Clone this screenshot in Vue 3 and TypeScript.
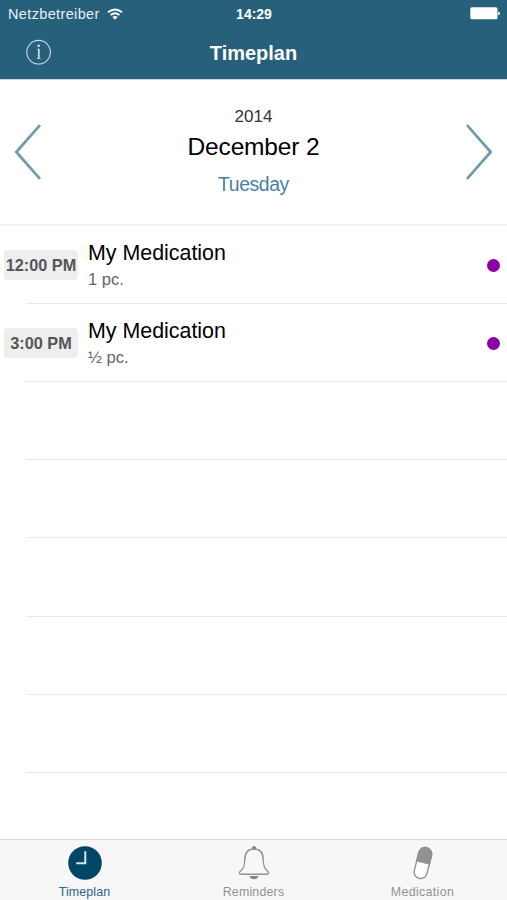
<script setup lang="ts">
interface Dose {
  time: string
  name: string
  amount: string
}

const doses: Dose[] = [
  { time: '12:00 PM', name: 'My Medication', amount: '1 pc.' },
  { time: '3:00 PM', name: 'My Medication', amount: '½ pc.' },
]
const emptyRows = 5
</script>

<template>
  <div class="screen">
    <header class="top">
      <div class="status">
        <div class="carrier">
          <span>Netzbetreiber</span>
          <svg class="wifi" width="16" height="12" viewBox="0 0 16 12" fill="none" stroke="#fff" stroke-width="2">
            <path d="M1 4.3Q8-1.3 15 4.3M3.6 7.1Q8 3.5 12.4 7.1" />
            <path d="M5.4 9Q8 7 10.6 9L8 11.7Z" fill="#fff" stroke="none" />
          </svg>
        </div>
        <span class="clock">14:29</span>
        <svg class="battery" width="30" height="13" viewBox="0 0 30 13" fill="#fff">
          <rect x="0.3" y="0.3" width="27.2" height="12" rx="1.6" />
          <path d="M28.2 4.4Q30 4.8 30 6.3T28.2 8.2Z" />
        </svg>
      </div>
      <nav class="navbar">
        <svg class="info" width="26" height="26" viewBox="0 0 26 26" fill="none" stroke="#c4dae5">
          <circle cx="12.6" cy="13.2" r="11.8" stroke-width="1.1" />
          <path d="M12.8 9.8V19.6" stroke-width="1.8" />
          <path d="M11.2 10.2H13M10.9 19.5H14.7" stroke-width="0.8" />
          <circle cx="12.7" cy="6.8" r="1.25" fill="#d3e5ee" stroke="none" />
        </svg>
        <h1>Timeplan</h1>
      </nav>
    </header>

    <section class="date">
      <svg width="28" height="56" viewBox="0 0 28 56" fill="none" stroke="#709bad" stroke-width="2.7">
        <path d="M26 1.2L2.3 28L26 54.8" />
      </svg>
      <div class="day">
        <div class="year">2014</div>
        <div class="month">December 2</div>
        <div class="weekday">Tuesday</div>
      </div>
      <svg width="28" height="56" viewBox="0 0 28 56" fill="none" stroke="#709bad" stroke-width="2.7">
        <path d="M2 1.2L25.7 28L2 54.8" />
      </svg>
    </section>

    <main class="list">
      <div v-for="dose in doses" :key="dose.time" class="row">
        <span class="time">{{ dose.time }}</span>
        <div class="text">
          <div class="name">{{ dose.name }}</div>
          <div class="amount">{{ dose.amount }}</div>
        </div>
        <span class="dot"></span>
      </div>
      <div v-for="n in emptyRows" :key="n" class="row"></div>
    </main>

    <footer class="tabs">
      <div class="tab active">
        <svg width="36" height="36" viewBox="0 0 36 36">
          <circle cx="18" cy="18" r="16.8" fill="#034567" />
          <path d="M18.3 6.2V18.3H9.2" fill="none" stroke="#d5e5ed" stroke-width="2" />
        </svg>
        <span class="timeplan">Timeplan</span>
      </div>
      <div class="tab">
        <svg width="36" height="36" viewBox="0 0 36 36" fill="none" stroke="#929292" stroke-width="1.4">
          <circle cx="18" cy="3" r="2" fill="#858585" stroke="none" />
          <path d="M18 4C11.5 4 8.9 8.8 8.8 14.5C8.7 21.5 7.4 23.8 4.4 26.3C2.7 27.8 3.3 29.3 5.2 29.3H30.8C32.7 29.3 33.3 27.8 31.6 26.3C28.6 23.8 27.3 21.5 27.2 14.5C27.1 8.8 24.5 4 18 4Z" />
          <path d="M13.6 31H22.4C21.6 35.3 14.4 35.3 13.6 31Z" fill="#858585" stroke="none" />
        </svg>
        <span class="reminders">Reminders</span>
      </div>
      <div class="tab">
        <svg width="36" height="36" viewBox="0 0 36 36">
          <g transform="rotate(14 18 18)">
            <rect x="11.4" y="2.2" width="13" height="31.6" rx="6.5" fill="#fff" stroke="#929292" stroke-width="1.4" />
            <path d="M10.7 18V8.7A7.2 7.2 0 0 1 25.1 8.7V18Z" fill="#929292" />
          </g>
        </svg>
        <span class="medication">Medication</span>
      </div>
    </footer>
  </div>
</template>

<style>
body {
  margin: 0;
}
</style>

<style scoped>
.screen {
  display: flex;
  flex-direction: column;
  width: 507px;
  height: 900px;
  overflow: hidden;
  background: #fff;
  color: #000;
  font-family: "Liberation Sans", Arial, sans-serif;
}
svg {
  display: block;
  flex: none;
}
.top {
  box-sizing: border-box;
  height: 79px;
  flex: none;
  background: #27607a;
  color: #fff;
}
.status {
  display: grid;
  grid-template-columns: 1fr auto 1fr;
  align-items: center;
  height: 27px;
  padding: 0 7px 0 8px;
  font-size: 14px;
}
.carrier {
  display: flex;
  align-items: center;
  gap: 7px;
  color: #e6f0f5;
  font-size: 14.5px;
  letter-spacing: 0.36px;
}
.clock {
  font-weight: 700;
}
.battery {
  justify-self: end;
}
.navbar {
  display: grid;
  grid-template-columns: 1fr auto 1fr;
  align-items: center;
  height: 50px;
}
.info {
  margin-left: 26px;
}
h1 {
  margin: 0;
  padding-top: 1px;
  font-size: 20px;
  line-height: 24px;
}
.date {
  box-sizing: border-box;
  display: flex;
  justify-content: space-between;
  height: 147px;
  flex: none;
  padding: 0 14px;
  border-top: 1px solid #c9dce5;
  border-bottom: 2px solid #f2f2f2;
}
.date > svg {
  margin-top: 44px;
}
.day {
  padding-top: 27px;
  text-align: center;
}
.year {
  font-size: 17px;
  line-height: 20px;
  color: #333;
}
.month {
  margin-top: 5px;
  font-size: 24.5px;
  line-height: 30px;
  letter-spacing: -0.15px;
}
.weekday {
  margin-top: 11px;
  font-size: 19.4px;
  line-height: 22px;
  letter-spacing: -0.4px;
  color: #4a819f;
}
.list {
  flex: 1;
}
.row {
  box-sizing: border-box;
  display: flex;
  align-items: center;
  height: 78.2px;
  padding: 0 7px 0 4px;
  background: linear-gradient(#e9e9e9, #e9e9e9) 26px 100% / 100% 1.3px no-repeat;
}
.time {
  width: 74px;
  height: 30px;
  border-radius: 4px;
  background: #eee;
  color: #555;
  font-size: 16.3px;
  font-weight: 700;
  line-height: 31px;
  text-align: center;
  white-space: nowrap;
}
.text {
  flex: 1;
  margin-left: 10px;
}
.name {
  font-size: 21.4px;
  line-height: 26px;
}
.amount {
  margin-top: 3px;
  font-size: 16.6px;
  line-height: 22px;
  color: #666;
}
.dot {
  width: 13px;
  height: 13px;
  border-radius: 50%;
  background: #8b00a5;
}
.tabs {
  box-sizing: border-box;
  display: grid;
  grid-template-columns: repeat(3, 1fr);
  height: 61px;
  flex: none;
  border-top: 1px solid #d6d6d6;
  background: #f7f7f7;
}
.tab {
  display: flex;
  flex-direction: column;
  align-items: center;
  padding-top: 5px;
  color: #929292;
  font-size: 12.4px;
  line-height: 14px;
}
.tab span {
  margin-top: 4px;
}
.active {
  color: #2c6585;
}
.timeplan {
  letter-spacing: 0.15px;
}
.reminders {
  letter-spacing: 0.18px;
}
.medication {
  letter-spacing: 0.35px;
}
</style>
